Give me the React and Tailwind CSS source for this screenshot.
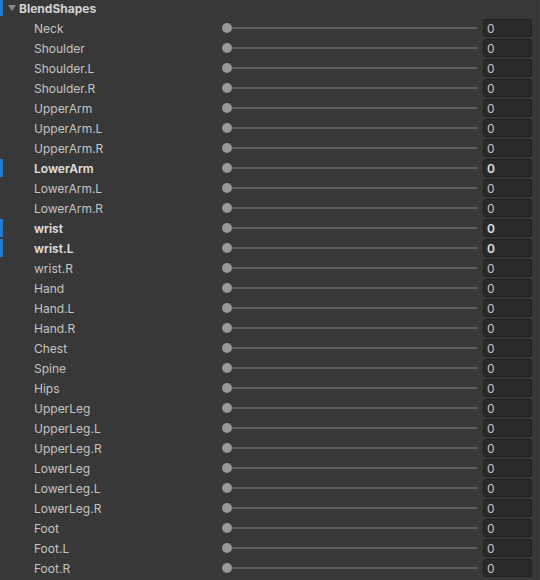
import React from "react";

const shapes = [
  { name: "Neck" },
  { name: "Shoulder" },
  { name: "Shoulder.L" },
  { name: "Shoulder.R" },
  { name: "UpperArm" },
  { name: "UpperArm.L" },
  { name: "UpperArm.R" },
  { name: "LowerArm", changed: true },
  { name: "LowerArm.L" },
  { name: "LowerArm.R" },
  { name: "wrist", changed: true },
  { name: "wrist.L", changed: true },
  { name: "wrist.R" },
  { name: "Hand" },
  { name: "Hand.L" },
  { name: "Hand.R" },
  { name: "Chest" },
  { name: "Spine" },
  { name: "Hips" },
  { name: "UpperLeg" },
  { name: "UpperLeg.L" },
  { name: "UpperLeg.R" },
  { name: "LowerLeg" },
  { name: "LowerLeg.L" },
  { name: "LowerLeg.R" },
  { name: "Foot" },
  { name: "Foot.L" },
  { name: "Foot.R" },
];

function ShapeRow({ name, changed }) {
  return (
    <div className="flex items-center h-5">
      {/* override marker */}
      <div
        className={
          changed ? "w-[3px] h-[18px] bg-[#1f7ccc]" : "w-[3px] h-[18px]"
        }
      />
      <div
        className={
          changed
            ? "w-[219px] pl-[31px] pt-[2px] text-[12px] font-semibold text-[#e0e0e0]"
            : "w-[219px] pl-[31px] pt-[2px] text-[12px] text-[#c4c4c4]"
        }
      >
        {name}
      </div>

      {/* slider */}
      <div className="flex items-center w-[255px]">
        <div className="w-[10px] h-[10px] rounded-full bg-[#999999] shrink-0" />
        <div className="flex-1 h-[2px] bg-[#5e5e5e]" />
      </div>

      {/* value field */}
      <div
        className={
          changed
            ? "ml-[6px] w-[49px] h-[18px] flex items-center pl-[3px] pt-[1px] rounded-[3px] bg-[#2a2a2a] border border-[#212121] text-[12px] font-semibold text-[#e0e0e0]"
            : "ml-[6px] w-[49px] h-[18px] flex items-center pl-[3px] pt-[1px] rounded-[3px] bg-[#2a2a2a] border border-[#212121] text-[12px] text-[#c4c4c4]"
        }
      >
        0
      </div>
    </div>
  );
}

export default function App() {
  return (
    <div
      className="w-[540px] h-[580px] bg-[#383838] flex overflow-hidden"
      style={{ fontFamily: "Inter, 'Noto Sans', sans-serif" }}
    >
      <div className="flex-1">
        {/* Foldout header */}
        <div className="flex items-center h-[18px]">
          <div className="w-[3px] h-[16px] self-start bg-[#1f7ccc]" />
          <svg width="16" height="18" viewBox="0 0 16 18" className="ml-[4px]">
            <path d="M1 5 L9 5 L5 11 Z" fill="#8a8a8a" />
          </svg>
          <span className="text-[12px] font-bold text-[#d2d2d2] -ml-[4px]">
            BlendShapes
          </span>
        </div>

        {shapes.map((s, i) => (
          <ShapeRow key={i} name={s.name} changed={s.changed} />
        ))}
      </div>

      {/* right edge */}
      <div className="w-[3px] border-l border-[#2c2c2c] bg-[#3c3c3c]" />
    </div>
  );
}
